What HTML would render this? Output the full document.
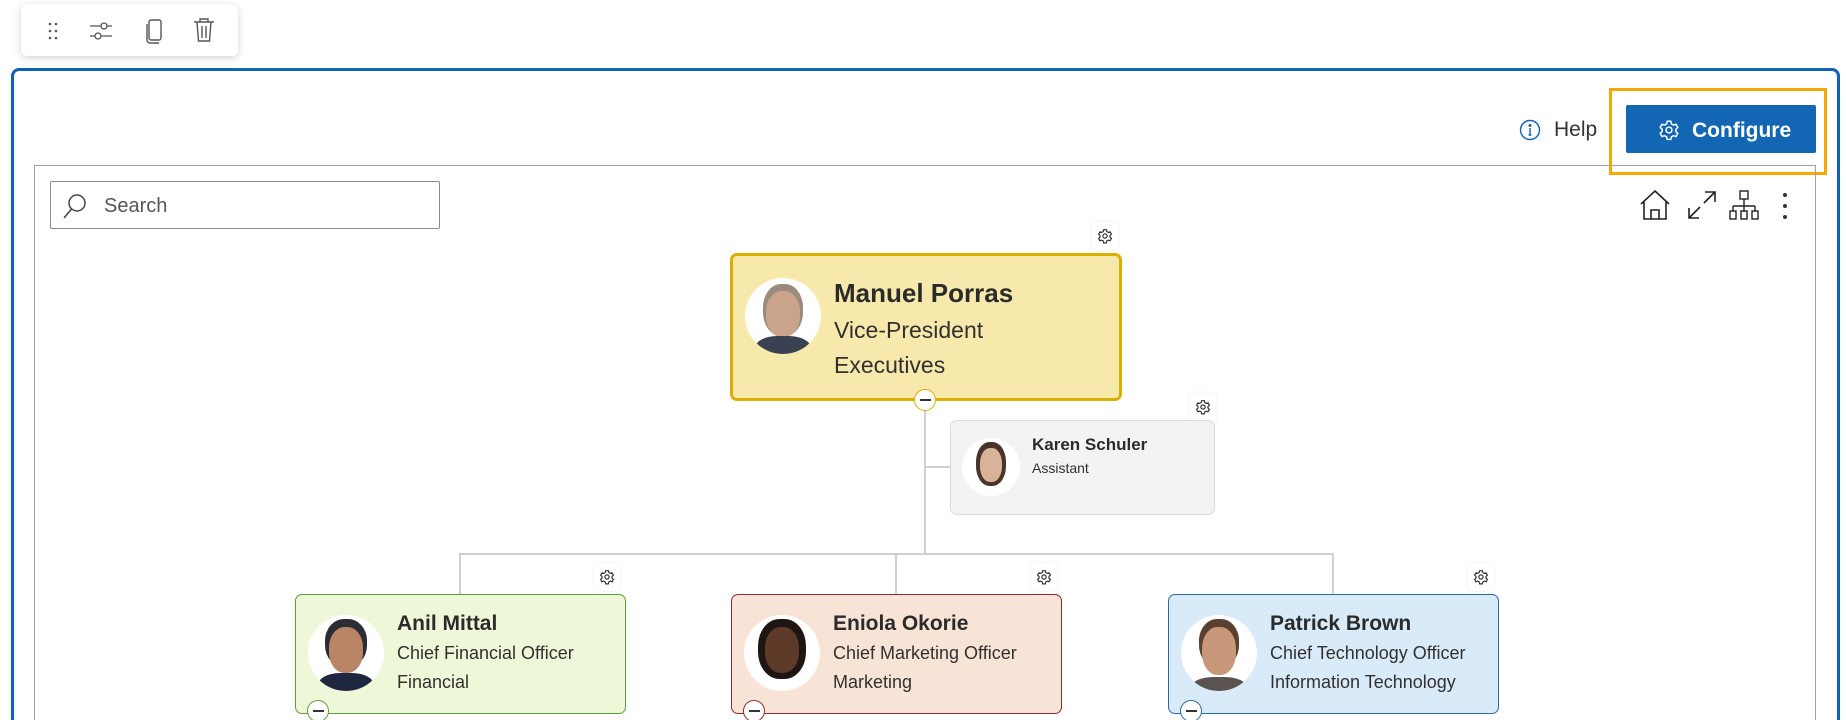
<!DOCTYPE html>
<html><head><meta charset="utf-8"><style>
*{box-sizing:border-box;margin:0;padding:0}
html{width:1846px;height:720px;overflow:hidden}
body{width:1846px;height:720px;overflow:hidden;background:#fff;font-family:"Liberation Sans",sans-serif;color:#323130;position:relative}
.a{position:absolute}
.tb{left:21px;top:4px;width:217px;height:52px;background:#fff;border-radius:6px;box-shadow:0 2px 8px rgba(0,0,0,.18)}
.outer{left:11px;top:68px;width:1829px;height:652px;border:3px solid #0f62b5;border-bottom:none;border-radius:8px 8px 0 0}
.panel{left:34px;top:165px;width:1782px;height:555px;border:1px solid #a0a0a0;border-bottom:none}
.search{left:50px;top:181px;width:390px;height:48px;border:1px solid #8a8a8a;border-radius:2px}
.gear{width:26px;height:28px;background:#fff;border-radius:3px;box-shadow:0 0 3px rgba(0,0,0,.08)}
.card{border-radius:7px}
.av{border-radius:50%;background:#fff;overflow:hidden}
.nm{font-weight:bold;color:#2b2b2b}
.ln{background:#d0d0d0}
.col{width:22px;height:22px;border-radius:50%;background:#fff}
.col:after{content:"";position:absolute;left:5px;top:9px;width:11px;height:2px;background:#333}
</style></head><body>
<div class="a tb">
<svg class="a" style="left:20px;top:14px" width="24" height="26" viewBox="0 0 24 26"><g fill="#555"><circle cx="9" cy="6" r="1.3"/><circle cx="15" cy="6" r="1.3"/><circle cx="9" cy="13" r="1.3"/><circle cx="15" cy="13" r="1.3"/><circle cx="9" cy="20" r="1.3"/><circle cx="15" cy="20" r="1.3"/></g></svg>
<svg class="a" style="left:67px;top:14px" width="26" height="26" viewBox="0 0 26 26" fill="none" stroke="#555" stroke-width="1.3"><path d="M2 8h22M2 18h22"/><circle cx="16" cy="8" r="3" fill="#fff"/><circle cx="10" cy="18" r="3" fill="#fff"/></svg>
<svg class="a" style="left:122px;top:13px" width="22" height="28" viewBox="0 0 22 28" fill="none" stroke="#555" stroke-width="1.4"><rect x="6" y="3" width="12" height="20" rx="2"/><path d="M4 7v16a3 3 0 0 0 3 3h9"/></svg>
<svg class="a" style="left:171px;top:12px" width="24" height="28" viewBox="0 0 24 28" fill="none" stroke="#555" stroke-width="1.4"><path d="M2 6h20M8 6V3h8v3M5 6l1.5 19h11L19 6M10 10v12M14 10v12"/></svg>
</div>
<div class="a outer"></div>
<svg class="a" style="left:1519px;top:119px" width="22" height="22" viewBox="0 0 22 22" fill="none" stroke="#0f62b5" stroke-width="1.4"><circle cx="11" cy="11" r="9.5"/><path d="M11 9v7M9.5 16h3"/><circle cx="11" cy="6.5" r=".8" fill="#0f62b5"/></svg>
<div class="a" style="left:1554px;top:118px;font-size:21px;color:#333">Help</div>
<div class="a" style="left:1609px;top:88px;width:218px;height:87px;border:3px solid #f5a800"></div>
<div class="a" style="left:1626px;top:105px;width:190px;height:48px;background:#1266b4;border-radius:2px"></div>
<svg class="a" style="left:1658px;top:119px" width="22" height="22" viewBox="0 0 24 24" fill="none" stroke="#fff" stroke-width="1.6"><circle cx="12" cy="12" r="3.2"/><path d="M10 2.5h4l.6 2.8 2.3 1.3 2.7-.9 2 3.5-2.1 1.9v2.6l2.1 1.9-2 3.5-2.7-.9-2.3 1.3-.6 2.8h-4l-.6-2.8-2.3-1.3-2.7.9-2-3.5 2.1-1.9v-2.6L2.4 9.2l2-3.5 2.7.9 2.3-1.3z"/></svg>
<div class="a" style="left:1692px;top:119px;font-size:21px;color:#fff;font-weight:bold">Configure</div>
<div class="a panel"></div>
<div class="a search"></div>
<svg class="a" style="left:62px;top:192px" width="26" height="28" viewBox="0 0 26 28" fill="none" stroke="#444" stroke-width="1.5"><circle cx="15" cy="11" r="8"/><path d="M9.5 17L2 26"/></svg>
<div class="a" style="left:104px;top:195px;font-size:20px;color:#555">Search</div>
<svg class="a" style="left:1638px;top:189px" width="34" height="32" viewBox="0 0 34 32" fill="none" stroke="#222" stroke-width="1.6"><path d="M3 15L17 2l14 13M6 13v17h22V13M13 30v-9h8v9"/></svg>
<svg class="a" style="left:1686px;top:189px" width="32" height="32" viewBox="0 0 32 32" fill="none" stroke="#222" stroke-width="1.6"><path d="M19 3h10v10M29 3L18 14M3 19v10h10M3 29l11-11"/></svg>
<svg class="a" style="left:1728px;top:189px" width="32" height="32" viewBox="0 0 32 32" fill="none" stroke="#222" stroke-width="1.4"><rect x="12" y="2" width="8" height="8"/><path d="M16 10v7M5 17h22M5 17v5M16 17v5M27 17v5"/><rect x="2" y="22" width="6" height="8"/><rect x="13" y="22" width="6" height="8"/><rect x="24" y="22" width="6" height="8"/></svg>
<svg class="a" style="left:1780px;top:191px" width="10" height="30"><g fill="#333"><circle cx="5" cy="4" r="2"/><circle cx="5" cy="15" r="2"/><circle cx="5" cy="26" r="2"/></g></svg>

<div class="a ln" style="left:924px;top:400px;width:2px;height:155px"></div>
<div class="a ln" style="left:925px;top:466px;width:26px;height:2px"></div>
<div class="a ln" style="left:459px;top:553px;width:875px;height:2px"></div>
<div class="a ln" style="left:459px;top:553px;width:2px;height:43px"></div>
<div class="a ln" style="left:895px;top:553px;width:2px;height:43px"></div>
<div class="a ln" style="left:1332px;top:553px;width:2px;height:43px"></div>

<div class="a gear" style="left:1092px;top:222px"></div>
<div class="a card" style="left:730px;top:253px;width:392px;height:148px;background:#f7e9ac;border:3px solid #dcae00"></div>
<div class="a av" style="left:745px;top:278px;width:76px;height:76px"><div class="a" style="left:18px;top:6px;width:40px;height:52px;border-radius:45%;background:#9a8b7f"></div><div class="a" style="left:21px;top:13px;width:34px;height:46px;border-radius:45%;background:#c9a48a"></div><div class="a" style="left:10px;top:58px;width:56px;height:30px;border-radius:40% 40% 0 0;background:#3b4150"></div></div>
<div class="a nm" style="left:834px;top:278px;font-size:26px">Manuel Porras</div>
<div class="a" style="left:834px;top:317px;font-size:23px">Vice-President</div>
<div class="a" style="left:834px;top:352px;font-size:23px">Executives</div>
<div class="a col" style="left:914px;top:389px;border:1.5px solid #dcae00"></div>

<div class="a gear" style="left:1190px;top:393px"></div>
<div class="a card" style="left:950px;top:420px;width:265px;height:95px;background:#f3f3f3;border:1px solid #dadada"></div>
<div class="a av" style="left:962px;top:438px;width:58px;height:58px"><div class="a" style="left:14px;top:4px;width:30px;height:44px;border-radius:45%;background:#4a3328"></div><div class="a" style="left:18px;top:10px;width:22px;height:34px;border-radius:45%;background:#d8b39a"></div></div>
<div class="a nm" style="left:1032px;top:435px;font-size:17px">Karen Schuler</div>
<div class="a" style="left:1032px;top:460px;font-size:14px">Assistant</div>

<div class="a gear" style="left:594px;top:563px"></div>
<div class="a card" style="left:295px;top:594px;width:331px;height:120px;background:#eef7d8;border:1.5px solid #5a9e3a"></div>
<div class="a av" style="left:308px;top:615px;width:76px;height:76px"><div class="a" style="left:17px;top:4px;width:42px;height:48px;border-radius:45%;background:#2c2d33"></div><div class="a" style="left:21px;top:12px;width:34px;height:46px;border-radius:45%;background:#b98566"></div><div class="a" style="left:10px;top:58px;width:56px;height:30px;border-radius:40% 40% 0 0;background:#1f2740"></div></div>
<div class="a nm" style="left:397px;top:612px;font-size:21px">Anil Mittal</div>
<div class="a" style="left:397px;top:643px;font-size:18px">Chief Financial Officer</div>
<div class="a" style="left:397px;top:672px;font-size:18px">Financial</div>
<div class="a col" style="left:307px;top:700px;border:1.5px solid #5a9e3a"></div>

<div class="a gear" style="left:1031px;top:563px"></div>
<div class="a card" style="left:731px;top:594px;width:331px;height:120px;background:#f7e4d7;border:1.5px solid #8b2a2a"></div>
<div class="a av" style="left:744px;top:615px;width:76px;height:76px"><div class="a" style="left:14px;top:4px;width:48px;height:60px;border-radius:45%;background:#1e1613"></div><div class="a" style="left:21px;top:12px;width:34px;height:46px;border-radius:45%;background:#5e3a28"></div></div>
<div class="a nm" style="left:833px;top:612px;font-size:21px">Eniola Okorie</div>
<div class="a" style="left:833px;top:643px;font-size:18px">Chief Marketing Officer</div>
<div class="a" style="left:833px;top:672px;font-size:18px">Marketing</div>
<div class="a col" style="left:743px;top:700px;border:1.5px solid #8b2a2a"></div>

<div class="a gear" style="left:1468px;top:563px"></div>
<div class="a card" style="left:1168px;top:594px;width:331px;height:120px;background:#d9eaf8;border:1.5px solid #2e6a9e"></div>
<div class="a av" style="left:1181px;top:615px;width:76px;height:76px"><div class="a" style="left:18px;top:4px;width:40px;height:48px;border-radius:45%;background:#5a4030"></div><div class="a" style="left:21px;top:12px;width:34px;height:48px;border-radius:45%;background:#c9977a"></div><div class="a" style="left:10px;top:62px;width:56px;height:26px;border-radius:40% 40% 0 0;background:#5a5350"></div></div>
<div class="a nm" style="left:1270px;top:612px;font-size:21px">Patrick Brown</div>
<div class="a" style="left:1270px;top:643px;font-size:18px">Chief Technology Officer</div>
<div class="a" style="left:1270px;top:672px;font-size:18px">Information Technology</div>
<div class="a col" style="left:1180px;top:700px;border:1.5px solid #2e6a9e"></div>

<svg class="a" style="left:1097px;top:228px" width="16" height="16" viewBox="0 0 24 24" fill="none" stroke="#333" stroke-width="1.8"><circle cx="12" cy="12" r="3.2"/><path d="M10 2.5h4l.6 2.8 2.3 1.3 2.7-.9 2 3.5-2.1 1.9v2.6l2.1 1.9-2 3.5-2.7-.9-2.3 1.3-.6 2.8h-4l-.6-2.8-2.3-1.3-2.7.9-2-3.5 2.1-1.9v-2.6L2.4 9.2l2-3.5 2.7.9 2.3-1.3z"/></svg>
<svg class="a" style="left:1195px;top:399px" width="16" height="16" viewBox="0 0 24 24" fill="none" stroke="#333" stroke-width="1.8"><circle cx="12" cy="12" r="3.2"/><path d="M10 2.5h4l.6 2.8 2.3 1.3 2.7-.9 2 3.5-2.1 1.9v2.6l2.1 1.9-2 3.5-2.7-.9-2.3 1.3-.6 2.8h-4l-.6-2.8-2.3-1.3-2.7.9-2-3.5 2.1-1.9v-2.6L2.4 9.2l2-3.5 2.7.9 2.3-1.3z"/></svg>
<svg class="a" style="left:599px;top:569px" width="16" height="16" viewBox="0 0 24 24" fill="none" stroke="#333" stroke-width="1.8"><circle cx="12" cy="12" r="3.2"/><path d="M10 2.5h4l.6 2.8 2.3 1.3 2.7-.9 2 3.5-2.1 1.9v2.6l2.1 1.9-2 3.5-2.7-.9-2.3 1.3-.6 2.8h-4l-.6-2.8-2.3-1.3-2.7.9-2-3.5 2.1-1.9v-2.6L2.4 9.2l2-3.5 2.7.9 2.3-1.3z"/></svg>
<svg class="a" style="left:1036px;top:569px" width="16" height="16" viewBox="0 0 24 24" fill="none" stroke="#333" stroke-width="1.8"><circle cx="12" cy="12" r="3.2"/><path d="M10 2.5h4l.6 2.8 2.3 1.3 2.7-.9 2 3.5-2.1 1.9v2.6l2.1 1.9-2 3.5-2.7-.9-2.3 1.3-.6 2.8h-4l-.6-2.8-2.3-1.3-2.7.9-2-3.5 2.1-1.9v-2.6L2.4 9.2l2-3.5 2.7.9 2.3-1.3z"/></svg>
<svg class="a" style="left:1473px;top:569px" width="16" height="16" viewBox="0 0 24 24" fill="none" stroke="#333" stroke-width="1.8"><circle cx="12" cy="12" r="3.2"/><path d="M10 2.5h4l.6 2.8 2.3 1.3 2.7-.9 2 3.5-2.1 1.9v2.6l2.1 1.9-2 3.5-2.7-.9-2.3 1.3-.6 2.8h-4l-.6-2.8-2.3-1.3-2.7.9-2-3.5 2.1-1.9v-2.6L2.4 9.2l2-3.5 2.7.9 2.3-1.3z"/></svg>
</body></html>
